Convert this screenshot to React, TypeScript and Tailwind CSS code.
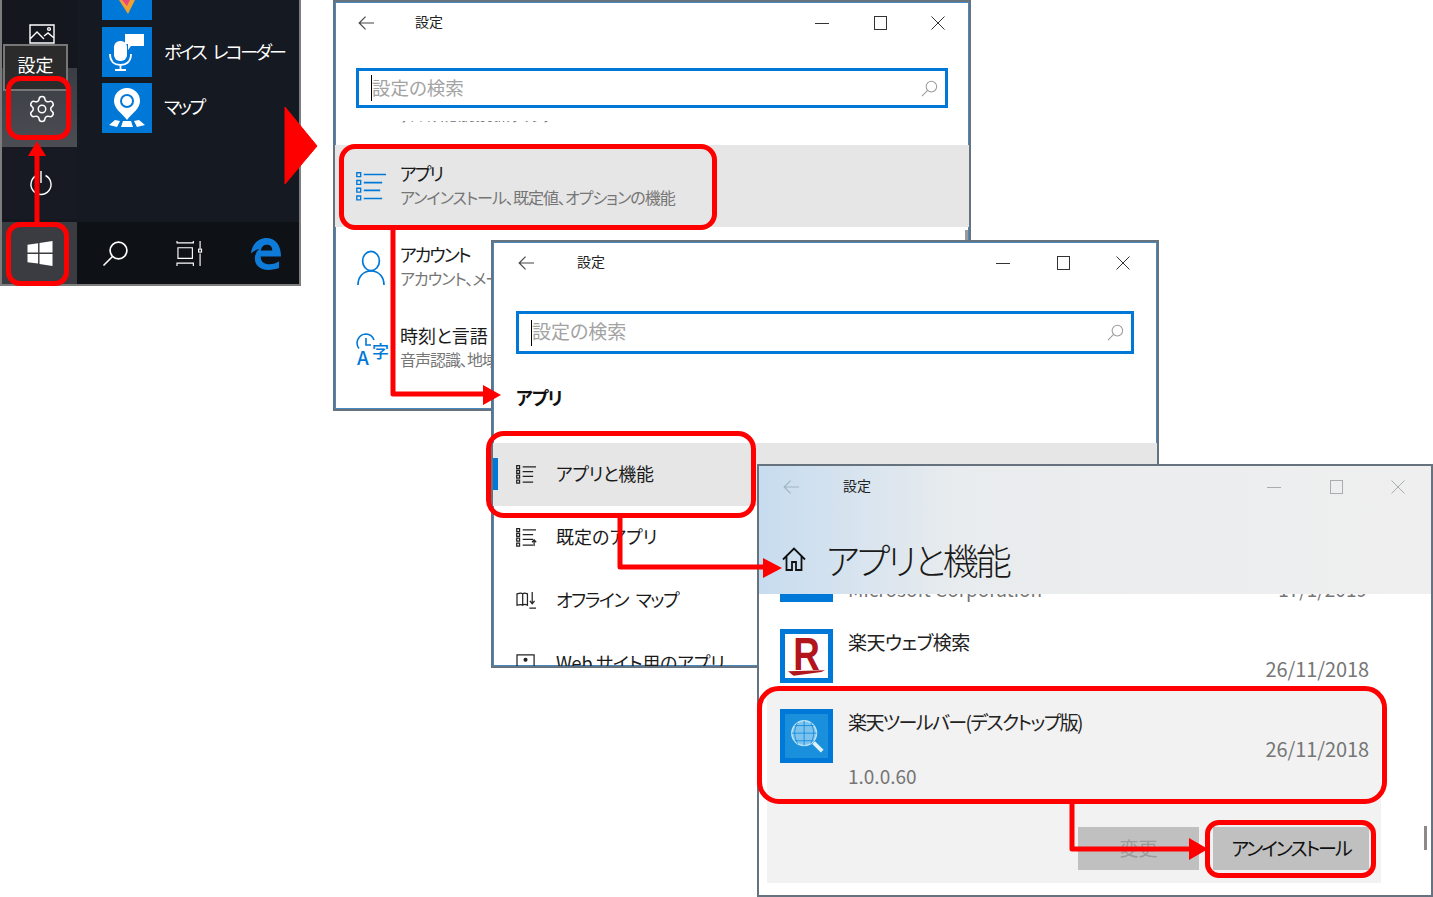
import React from 'react';
import { Settings } from 'lucide-react';

function BackArrow({ className }: { className: string }) {
  return (
    <svg viewBox="0 0 18 16" className={className} fill="none" stroke="currentColor" strokeWidth="1.2">
      <path d="M17 8H1.5M8 1.2 1.2 8 8 14.8" />
    </svg>
  );
}

function SearchGlyph({ className }: { className: string }) {
  return (
    <svg viewBox="0 0 18 18" className={className} fill="none" stroke="currentColor" strokeWidth="1.1">
      <circle cx="11" cy="7" r="5.6" />
      <path d="M7 11 1 17" />
    </svg>
  );
}

function TitleBar({ muted, btn, ctl, lead }: { muted?: boolean; btn: string; ctl: string; lead: string }) {
  const tone = muted ? 'text-[#a9adb2]' : 'text-[#333333]';
  return (
    <div className="flex items-center h-[42px] shrink-0">
      <div className={`${lead} ${muted ? 'text-[#9fb3c6]' : 'text-[#444444]'}`}>
        <BackArrow className="w-[17px] h-[16px]" />
      </div>
      <span className="text-[14px] leading-[20px] mt-[-4px] text-[#222222]">設定</span>
      <div className={`ml-auto flex items-center ${ctl} ${tone}`}>
        <div className={`${btn} flex justify-center`}>
          <div className="w-[14px] h-px bg-current" />
        </div>
        <div className={`${btn} flex justify-center`}>
          <div className="w-[13px] h-[14px] border border-current" />
        </div>
        <div className={`${btn} flex justify-center`}>
          <svg viewBox="0 0 14 14" className="w-[14px] h-[14px]" fill="none" stroke="currentColor" strokeWidth="1">
            <path d="M.5.5l13 13M13.5.5l-13 13" />
          </svg>
        </div>
      </div>
    </div>
  );
}

function SearchBox({ className, text }: { className: string; text: string }) {
  return (
    <div className={`flex items-center border-[3px] border-[#0078d7] bg-white ${className}`}>
      <div className="w-px h-[26px] bg-black ml-[12px]" />
      <span className={`text-[#a3a3a3] leading-none ${text}`}>設定の検索</span>
      <SearchGlyph className="w-[17px] h-[17px] ml-auto mr-[7px] text-[#9a9a9a]" />
    </div>
  );
}

function ListIcon() {
  return (
    <svg viewBox="0 0 32 30" className="w-[31px] h-[29px] text-[#0078d7]" fill="none" stroke="currentColor" strokeWidth="1.6">
      <path d="M8 2.5h23M8 11h19M8 19h17M8 27.5h19" />
      <path d="M.8.8h4v4h-4zM.8 8.8h4v4h-4zM.8 16.8h4v4h-4zM.8 24.8h4v4h-4z" strokeWidth="1.4" />
    </svg>
  );
}

function PersonIcon() {
  return (
    <svg viewBox="0 0 28 36" className="w-[28px] h-[36px] ml-[1px] text-[#0078d7]" fill="none" stroke="currentColor" strokeWidth="1.7">
      <ellipse cx="14" cy="11" rx="8.4" ry="9.6" />
      <path d="M1 35c0-8 5-14 13-14s13 6 13 14" />
    </svg>
  );
}

function TimeLangIcon() {
  return (
    <div className="relative w-[32px] h-[34px] text-[#0078d7]">
      <svg viewBox="0 0 20 20" className="absolute left-0 top-0 w-[20px] h-[20px]" fill="none" stroke="currentColor" strokeWidth="1.6">
        <path d="M10 1a9 9 0 0 0-7 14.500M10 1a9 9 0 0 1 8 6M10 5v7h5" />
      </svg>
      <span className="absolute left-[1px] bottom-[1px] text-[19px] leading-none font-medium">A</span>
      <span className="absolute right-[-1px] top-[9px] text-[17px] leading-none font-medium">字</span>
    </div>
  );
}

function SmallList({ kind = 'list' }: { kind?: 'list' | 'arrow' | 'map' | 'web' }) {
  if (kind === 'map') {
    return (
      <svg viewBox="0 0 22 20" className="w-[21px] h-[19px] ml-[1px] text-[#222222]" fill="none" stroke="currentColor" strokeWidth="1.3">
        <path d="M1 3c3-1 5-1 6 0 1-1 3-1 5 0v12c-2-1-4-1-5 0-1-1-3-1-6 0zM7 3v12M12 3v12" />
        <path d="M17 1v12M14.5 10.5 17 13.5 19.5 10.5M14 18h7" />
      </svg>
    );
  }
  if (kind === 'web') {
    return (
      <svg viewBox="0 0 22 20" className="w-[21px] h-[19px] ml-[1px] text-[#222222]" fill="none" stroke="currentColor" strokeWidth="1.3">
        <path d="M1 1h18v18H1z" />
        <circle cx="10" cy="6" r="1.500" fill="currentColor" />
      </svg>
    );
  }
  return (
    <svg viewBox="0 0 22 20" className="w-[21px] h-[19px] ml-[1px] text-[#222222]" fill="none" stroke="currentColor" strokeWidth="1.3">
      <path d="M7 2h14M7 7h11M7 12h11M7 18h11" />
      <path d="M.7.7h3v3h-3zM.7 5.7h3v3h-3zM.7 10.7h3v3h-3zM.7 16h3v3h-3z" />
      {kind === 'arrow' && <path d="M19 19v-6M16.8 15 19 12.5 21.2 15" />}
    </svg>
  );
}

function HomeIcon() {
  return (
    <svg viewBox="0 0 24 24" className="w-[24px] h-[24px] text-[#111111]" fill="none" stroke="currentColor" strokeWidth="1.8">
      <path d="M1 12.5 12 1.5l11 11M4.5 9.5V23h5.5v-8h4v8h5.5V9.5" />
    </svg>
  );
}

function StartMenu() {
  return (
    <div className="absolute left-0 top-0 w-[301px] h-[286px] border-2 border-[#7d7d7d] border-t-0 bg-[#151921] flex flex-col overflow-hidden">
      <div className="flex flex-1 min-h-0">
        <div className="w-[75px] shrink-0 flex flex-col bg-[#14171e]">
          <div className="h-[68px] flex justify-center pt-[24px] pl-[4px] shrink-0">
            <svg viewBox="0 0 26 20" className="w-[26px] h-[20px] text-white" fill="none" stroke="currentColor" strokeWidth="1.4">
              <path d="M1 1h24v18H1zM1 15l7-7 7 7M15 12l4-3 6 5" />
              <circle cx="20" cy="5" r="1.4" />
            </svg>
          </div>
          <div className="h-[79px] shrink-0 bg-gradient-to-b from-[#3a3d44] to-[#4b4d53] flex items-center justify-center pt-[2px] pl-[5px]">
            <Settings size={30} strokeWidth={1.2} className="text-white" />
          </div>
          <div className="h-[72px] shrink-0 bg-[#171a22] flex items-center justify-center pl-[3px]">
            <svg viewBox="0 0 24 24" className="w-[24px] h-[26px] text-white" fill="none" stroke="currentColor" strokeWidth="1.4">
              <path d="M7.5 4.5a10 10 0 1 0 9 0M12 0v12" />
            </svg>
          </div>
        </div>
        <div className="flex-1 pl-[25px] flex flex-col">
          <div className="w-[50px] h-[20px] bg-[#0078d7] overflow-hidden flex justify-center">
            <svg viewBox="0 0 24 20" className="w-[24px] h-[20px]">
              <path d="M4 0h16L13 14z" fill="#f0a030" />
              <path d="M7 0h8l-3 6z" fill="#e8487a" />
            </svg>
          </div>
          <div className="flex items-center h-[50px] mt-[7px]">
            <div className="w-[50px] h-[50px] bg-[#0078d7] flex items-center justify-center">
              <svg viewBox="0 0 36 38" className="w-[36px] h-[38px] text-white">
                <rect x="5" y="8" width="13" height="20" rx="6" fill="currentColor" />
                <path d="M1 21c0 8 5 11 10.500 11S22 29 22 21M11.500 32v4M6 37h11" fill="none" stroke="currentColor" strokeWidth="1.8" />
                <path d="M16 1h19v12H22l-3 4v-6h-3z" fill="currentColor" />
              </svg>
            </div>
            <span className="ml-[12px] mt-[-2px] text-white text-[18px] tracking-[-2.600px] [word-spacing:6px] whitespace-nowrap">ボイス レコーダー</span>
          </div>
          <div className="flex items-center h-[50px] mt-[6px]">
            <div className="w-[50px] h-[50px] bg-[#0078d7] flex items-center justify-center">
              <svg viewBox="0 0 36 42" className="w-[36px] h-[42px] text-white">
                <path d="M18 1a13 13 0 0 1 13 13c0 8-8 12-13 19C13 26 5 22 5 14A13 13 0 0 1 18 1z" fill="currentColor" />
                <circle cx="18" cy="14" r="7" fill="#0078d7" />
                <circle cx="18" cy="14" r="5" fill="currentColor" />
                <path d="M0 38l6-5 5 1-3 6zM12 40l2-6h8l2 6zM36 38l-6-5-5 1 3 6z" fill="currentColor" />
              </svg>
            </div>
            <span className="ml-[12px] mt-[-4px] text-white text-[18px] tracking-[-2.400px]">マップ</span>
          </div>
        </div>
      </div>
      <div className="h-[62px] shrink-0 flex bg-[#0e1116]">
        <div className="w-[75px] bg-[#3a3c42] flex items-center justify-center">
          <svg viewBox="0 0 26 26" className="w-[26px] h-[25px] text-white" fill="currentColor">
            <path d="M0 4l11-1.600V12H0zM12.500 2.200 26 0v12H12.500zM0 13.500h11v10L0 22zM12.500 13.500H26V26l-13.500-2.200z" />
          </svg>
        </div>
        <div className="flex-1 flex items-center text-white">
          <SearchGlyph className="w-[27px] h-[27px] ml-[25px]" />
          <svg viewBox="0 0 28 26" className="w-[27px] h-[25px] ml-[47px]" fill="none" stroke="currentColor" strokeWidth="1.2">
            <path d="M1 0v2h17V0M2 7h15v11H2zM1 26v-3h17v3M25 0v8M25 13v13" />
            <rect x="23.500" y="8.500" width="3" height="3" />
          </svg>
          <svg viewBox="0 0 32 34" className="w-[31px] h-[33px] ml-[47px] text-[#0f7bd8]">
            <path d="M1 17C2 7 9 1 17 1c9 0 15 7 15 19H11c0 6 4 8 9 8 4 0 7-1 10-3v7c-3 1-7 2-11 2-9 0-14-5-14-12 0-4 2-8 5-10-4 1-7 3-9 5zM11 14h12c0-4-2-6-6-6-3 0-5 2-6 6z" fill="currentColor" />
          </svg>
        </div>
      </div>
      <div className="absolute left-[1px] top-[44px] w-[65px] h-[47px] bg-[#2b2b2b] border-2 border-[#777777] flex items-start justify-center pt-[5px] text-white text-[18px] leading-[26px]">
        設定
      </div>
    </div>
  );
}

function MainRow({ icon, title, sub, active, track, lift }: { icon: React.ReactNode; title: string; sub: string; active?: boolean; track?: string; lift: string }) {
  return (
    <div className={`flex items-center h-[82px] shrink-0 ${active ? 'bg-[#e6e6e6]' : ''}`}>
      <div className="w-[65px] pl-[21px] shrink-0">{icon}</div>
      <div className={`flex flex-col whitespace-nowrap ${lift}`}>
        <span className={`text-[18px] leading-[25px] text-[#1a1a1a] ${track ?? ''}`}>{title}</span>
        <span className="text-[16px] leading-[22px] text-[#767676] tracking-[-1px]">{sub}</span>
      </div>
    </div>
  );
}

function SettingsWindow() {
  return (
    <div className="absolute left-[333px] top-0 w-[638px] h-[411px] bg-white border-2 border-[#66727d] shadow-[inset_0_0_0_1px_#4a88c0] flex flex-col overflow-hidden">
      <div className="absolute right-[1px] top-[228px] w-[3px] h-[12px] bg-[#9a9a9a]" />
      <TitleBar btn="w-[58px]" ctl="pr-[2px]" lead="w-[80px] pl-[23px]" />
      <SearchBox className="h-[40px] mx-[21px] mt-[24px] shrink-0" text="text-[18.500px] mt-[-2px]" />
      <div className="h-[37px] shrink-0 pt-[13px]">
        <div className="h-[3px] overflow-hidden">
          <div className="ml-[65px] mt-[-12px] text-[12px] leading-[16px] text-[#777777] whitespace-nowrap">デバイス、Bluetooth、プリンター</div>
        </div>
      </div>
      <MainRow active lift="mt-[-4px]" track="tracking-[-2px]" icon={<ListIcon />} title="アプリ" sub="アンインストール、既定値、オプションの機能" />
      <MainRow lift="mt-[-5px]" track="tracking-[-2px]" icon={<PersonIcon />} title="アカウント" sub="アカウント、メール、同期、職場、家族" />
      <MainRow lift="mt-[-8px]" icon={<TimeLangIcon />} title="時刻と言語" sub="音声認識、地域、日付" />
    </div>
  );
}

function SideRow({ icon, label, active, track }: { icon: React.ReactNode; label: string; active?: boolean; track?: string }) {
  return (
    <div className={`relative flex items-center h-[63px] shrink-0 pl-[22px] ${active ? 'bg-[#e6e6e6]' : ''}`}>
      {active && <div className="absolute left-0 top-[15px] w-[5px] h-[32px] bg-[#0078d7]" />}
      <div className="w-[41px] shrink-0">{icon}</div>
      <span className={`text-[18px] mt-[-2px] text-[#1a1a1a] whitespace-nowrap ${track ?? ''}`}>{label}</span>
    </div>
  );
}

function AppsWindow() {
  return (
    <div className="absolute left-[491px] top-[240px] w-[668px] h-[428px] bg-white border-2 border-[#66727d] shadow-[inset_0_0_0_1px_#4a88c0] flex flex-col overflow-hidden">
      <TitleBar btn="w-[60px]" ctl="pr-[4px]" lead="w-[84px] pl-[25px]" />
      <SearchBox className="h-[43px] mx-[23px] mt-[27px] shrink-0" text="text-[19px] mt-[-5px]" />
      <div className="mt-[28px] h-[31px] pl-[23px] font-bold text-[18px] leading-[31px] text-[#111111] tracking-[-1px] shrink-0">アプリ</div>
      <div className="mt-[30px] flex flex-col">
        <SideRow active track="tracking-[-0.4px]" icon={<SmallList />} label="アプリと機能" />
        <SideRow icon={<SmallList kind="arrow" />} label="既定のアプリ" />
        <SideRow track="tracking-[-1.400px] [word-spacing:5px]" icon={<SmallList kind="map" />} label="オフライン マップ" />
        <SideRow track="tracking-[-0.2px]" icon={<SmallList kind="web" />} label="Web サイト用のアプリ" />
      </div>
    </div>
  );
}

function AppRow({ icon, name, date, version, selected, track }: { icon: React.ReactNode; name: string; date: string; version?: string; selected?: boolean; track?: string }) {
  return (
    <div className={`flex pl-[13px] pr-[12px] ${selected ? 'pt-[19px] h-[137px]' : 'h-[60px]'}`}>
      <div className="w-[53px] h-[54px] shrink-0">{icon}</div>
      <div className="flex-1 ml-[15px] flex flex-col">
        <span className={`text-[19px] leading-[26px] text-[#222222] ${track ?? ''}`}>{name}</span>
        <span className="self-end text-[20px] leading-[28px] text-[#767676] tracking-[-0.1px]">{date}</span>
        {version && <span className="text-[19px] leading-[26px] text-[#767676]">{version}</span>}
      </div>
    </div>
  );
}

function FeaturesWindow() {
  return (
    <div className="absolute left-[757px] top-[464px] w-[676px] h-[433px] bg-white border-2 border-[#66727d] flex flex-col overflow-hidden">
      <div className="h-[128px] shrink-0 bg-gradient-to-r from-[#c7dcef] via-[#e9ecee] via-[30%] to-[#efefef]">
        <TitleBar muted btn="w-[62px]" ctl="pr-[2px]" lead="w-[84px] pl-[24px]" />
        <div className="flex items-center pl-[23px] mt-[26px]">
          <HomeIcon />
          <span className="ml-[20px] text-[36px] leading-[50px] font-light text-[#1a1a1a] tracking-[-2.800px]">アプリと機能</span>
        </div>
      </div>
      <div className="h-[8px] shrink-0 flex pl-[21px] overflow-hidden">
        <div className="w-[53px] h-full bg-[#0078d7]" />
        <div className="relative flex-1 ml-[15px]">
          <span className="absolute left-0 top-[-18px] text-[19px] leading-[26px] text-[#767676]">Microsoft Corporation</span>
          <span className="absolute right-[64px] top-[-18px] text-[19px] leading-[26px] text-[#767676]">17/1/2019</span>
        </div>
      </div>
      <div className="pl-[8px] pr-[50px] pt-[27px]">
        <AppRow
          name="楽天ウェブ検索"
          date="26/11/2018"
          track="tracking-[-0.5px]"
          icon={
            <div className="w-full h-full bg-white border-[5px] border-[#0078d7] relative flex justify-center overflow-hidden">
              <span className="font-['Liberation_Sans'] font-bold text-[46px] leading-[40px] text-[#b3151c] scale-x-[0.8] origin-center">R</span>
              <svg viewBox="0 0 40 6" className="absolute left-[3px] bottom-[2px] w-[37px] h-[6px]">
                <path d="M0 1 40 0 36 2 6 6z" fill="#b3151c" />
              </svg>
            </div>
          }
        />
        <div className="bg-[#f2f2f2] h-[193px] mt-[1px]">
          <AppRow
            selected
            name="楽天ツールバー(デスクトップ版)"
            date="26/11/2018"
            version="1.0.0.60"
            track="tracking-[-1.600px]"
            icon={
              <div className="w-full h-full bg-[#0078d7] p-[5px]">
                <div className="w-full h-full bg-[#1a8fdc] flex items-center justify-center">
                  <svg viewBox="0 0 40 40" className="w-[38px] h-[38px]" fill="none" stroke="#bfe4f7">
                    <circle cx="17" cy="17" r="13" fill="#a9d9f3" fillOpacity="0.7" strokeWidth="1.500" />
                    <path d="M4 17h26M17 4v26M7 9h20M7 25h20M10 6c-4 8-4 14 0 22M24 6c4 8 4 14 0 22" strokeWidth="1" stroke="#1a8fdc" />
                    <path d="M27 27l9 9" strokeWidth="4" stroke="#dff2fb" />
                  </svg>
                </div>
              </div>
            }
          />
          <div className="flex justify-end gap-[14px] pr-[12px]">
            <div className="w-[121px] h-[43px] bg-[#c0c0c0] flex items-center justify-center text-[19px] text-[#9b9b9b]">変更</div>
            <div className="w-[156px] h-[43px] bg-[#c0c0c0] flex items-center justify-center text-[19px] text-[#111111] tracking-[-2px]">アンインストール</div>
          </div>
        </div>
      </div>
      <div className="absolute right-[4px] top-[360px] w-[3px] h-[24px] bg-[#8a8a8a]" />
    </div>
  );
}

function RedBox({ className }: { className: string }) {
  return <div className={`absolute border-[5px] border-[#ff0000] ${className}`} />;
}

function Annotations() {
  return (
    <>
      <RedBox className="left-[6px] top-[76px] w-[65px] h-[64px] rounded-[14px]" />
      <RedBox className="left-[6px] top-[222px] w-[63px] h-[64px] rounded-[14px]" />
      <RedBox className="left-[339px] top-[144px] w-[378px] h-[86px] rounded-[16px]" />
      <RedBox className="left-[486px] top-[431px] w-[270px] h-[87px] rounded-[18px]" />
      <RedBox className="left-[757px] top-[686px] w-[630px] h-[118px] rounded-[22px]" />
      <RedBox className="left-[1205px] top-[820px] w-[171px] h-[58px] rounded-[14px]" />
      <svg viewBox="0 0 1433 897" className="absolute left-0 top-0 w-[1433px] h-[897px] pointer-events-none">
        <path d="M285 107 317 146 285 184z" fill="#ff0000" stroke="#ff0000" strokeLinejoin="round" />
        <path d="M37 222V150" stroke="#ff0000" strokeWidth="5" fill="none" />
        <path d="M28 156 37 141 46 156z" fill="#ff0000" />
        <path d="M393 230V394H486" stroke="#ff0000" strokeWidth="5" fill="none" strokeLinejoin="round" />
        <path d="M483 385 501 395 483 405z" fill="#ff0000" />
        <path d="M620 517V567H766" stroke="#ff0000" strokeWidth="5" fill="none" strokeLinejoin="round" />
        <path d="M763 558 782 568 763 578z" fill="#ff0000" />
        <path d="M1072 803V849H1192" stroke="#ff0000" strokeWidth="5" fill="none" strokeLinejoin="round" />
        <path d="M1189 838 1208 849 1189 860z" fill="#ff0000" />
      </svg>
    </>
  );
}

export default function App() {
  return (
    <div className="relative w-[1433px] h-[897px] bg-white overflow-hidden font-['Noto_Sans_CJK_JP','Noto_Sans',sans-serif] [font-feature-settings:'palt']">
      <StartMenu />
      <SettingsWindow />
      <AppsWindow />
      <FeaturesWindow />
      <Annotations />
    </div>
  );
}
